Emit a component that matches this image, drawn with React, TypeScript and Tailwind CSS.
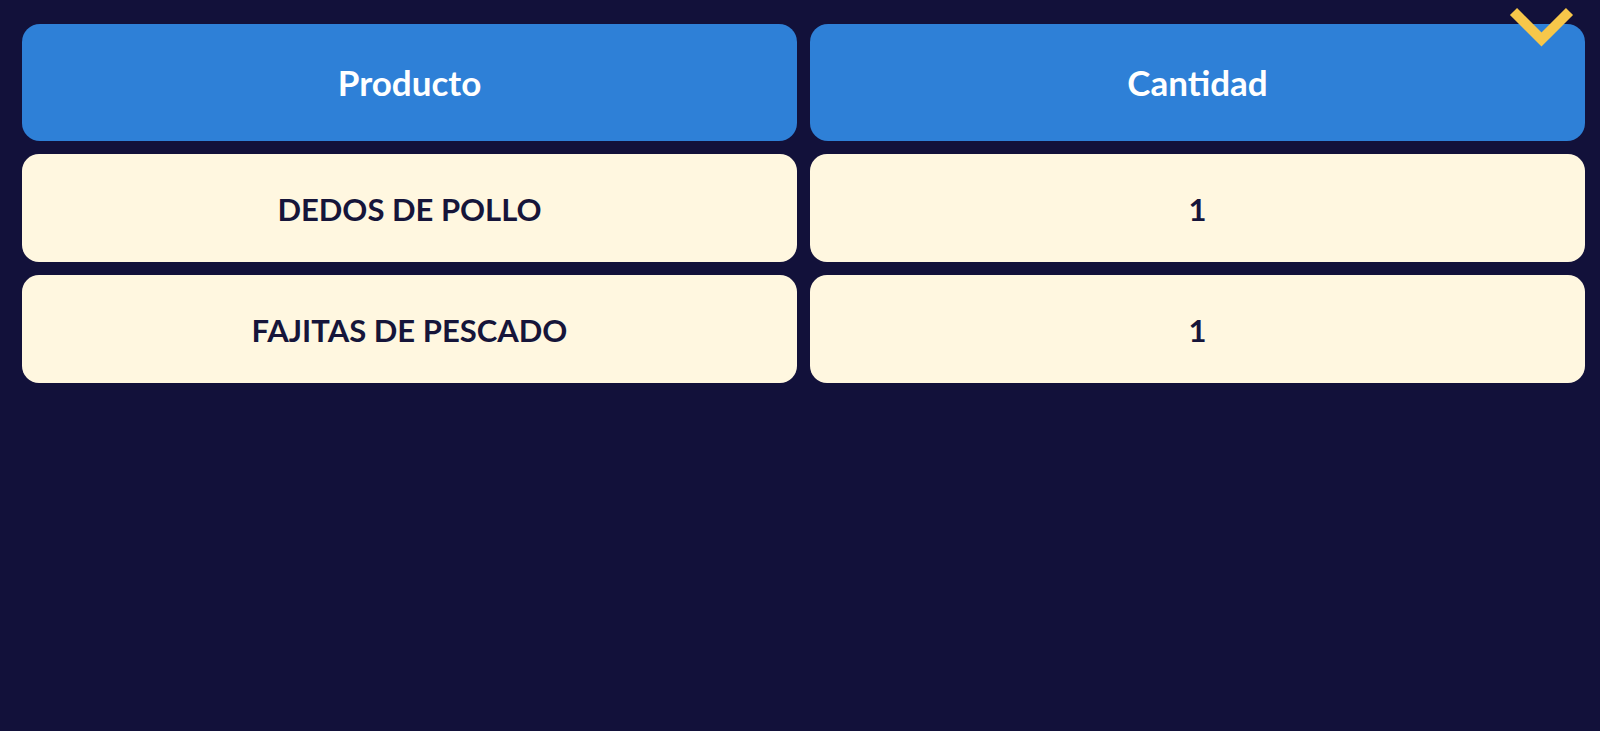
const rows = [
  { name: "DEDOS DE POLLO", qty: 1 },
  { name: "FAJITAS DE PESCADO", qty: 1 },
];

const Chevron = () => (
  <svg className="absolute top-0 left-[1500px]" width="84" height="56" viewBox="0 0 84 56">
    <polyline
      points="13.5,11.5 41.5,39.5 69.5,11.5"
      fill="none"
      stroke="#f7c74a"
      strokeWidth="10"
      strokeLinejoin="miter"
    />
  </svg>
);

const App = () => {
  return (
    <div className="relative min-h-screen bg-[#12113a] pt-6 pl-[22px] pr-[15px] font-['Lato',sans-serif]">
      <div className="grid grid-cols-2 gap-x-[13px] gap-y-[13px]">
        <div className="flex h-[117px] items-center justify-center rounded-[18px] bg-[#2e80d7] text-[35px] font-bold text-white">
          Producto
        </div>
        <div className="flex h-[117px] items-center justify-center rounded-[18px] bg-[#2e80d7] text-[35px] font-bold text-white">
          Cantidad
        </div>

        {rows.map((row) => (
          <>
            <div key={row.name + "-n"} className="flex h-[108px] items-center justify-center rounded-[17px] bg-[#fff7e0] pt-[3px] text-[31px] font-bold text-[#16153a]">
              {row.name}
            </div>
            <div key={row.name + "-q"} className="flex h-[108px] items-center justify-center rounded-[17px] bg-[#fff7e0] pt-[3px] text-[31px] font-bold text-[#16153a]">
              {row.qty}
            </div>
          </>
        ))}
      </div>

      <Chevron />
    </div>
  );
};

export default App;
